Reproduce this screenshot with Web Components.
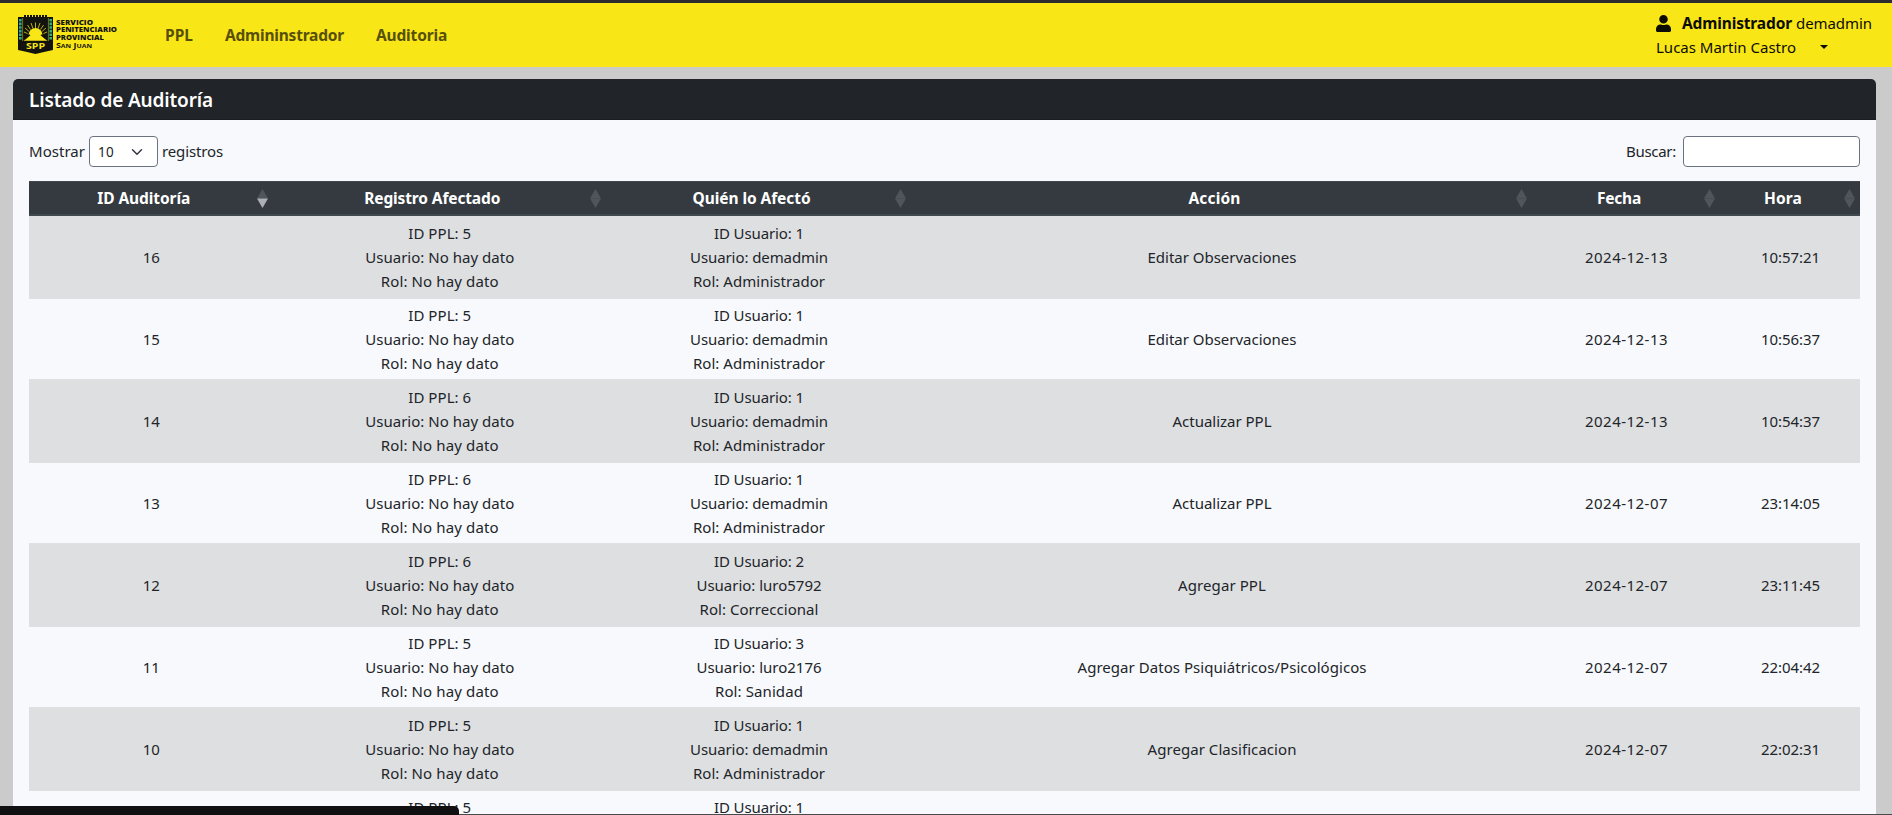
<!DOCTYPE html>
<html lang="es">
<head>
<meta charset="utf-8">
<title>Listado de Auditoría</title>
<style>
html,body{margin:0;height:100%;overflow:hidden}
body{background:#cbcbcb;color:#212529;font:15px/24px "Noto Sans","Open Sans",sans-serif}
</style>
</head>
<body>
<audit-page></audit-page>
<script>
// Text whose tracking is adjusted so that it spans a given width.
class FitText extends HTMLElement {
  constructor() {
    super();
    this.attachShadow({mode: 'open'}).innerHTML =
      '<style>:host{display:inline-block;white-space:nowrap;text-align:left}span{display:inline-block}</style><span><slot></slot></span>';
  }
  connectedCallback() {
    const w = parseFloat(this.getAttribute('w'));
    const span = this.shadowRoot.querySelector('span');
    requestAnimationFrame(() => this.fit(span, w));
    this.fit(span, w);
  }
  fit(span, w) {
    span.style.letterSpacing = '0';
    const n = this.textContent.length;
    const natural = span.getBoundingClientRect().width;
    if (natural) span.style.letterSpacing = ((w - natural) / n).toFixed(4) + 'px';
    this.style.width = w + 'px';
  }
}

class SppLogo extends HTMLElement {
  constructor() {
    super();
    this.attachShadow({mode: 'open'}).innerHTML = `
<style>:host{display:block;width:104px;height:40px}svg{display:block}
text{font-family:"Open Sans","Noto Sans",sans-serif;font-weight:800;font-size:6.4px;fill:#15140c}</style>
<svg width="104" height="40" viewBox="0 0 104 40">
<path d="M0 2H35V35L26 37 17.5 39 9 37 0 35Z" fill="#12130f"/>
<path d="M6 1.2H30" stroke="#12130f" stroke-width="2.4" stroke-dasharray="2 1"/>
<path d="M2.3 4V25M32.7 4V25" stroke="#2fae86" stroke-width="2.6" stroke-dasharray="2.6 1"/>
<path d="M4.6 3V26M30.4 3V26" stroke="#a89d18" stroke-width=".7"/>
<g stroke="#e5d416" stroke-width=".8"><path d="M17.5 13V7.5M15 13.5L13 8M20 13.5L22 8M12.5 14.5L9.5 10M22.5 14.5L25.5 10M10.8 16.3L7 13M24.2 16.3L28 13M9.5 18.5L6 17M25.5 18.5L29 17"/></g>
<path d="M10.5 20A7 7 0 0 1 24.5 20Z" fill="#f9e616"/>
<path d="M5.5 25.8C9 24 12 20 14.8 18.6L17.5 19.5 20.2 18.6C23 20 26 24 29.5 25.8Z" fill="#f9e616"/>
<path d="M6 23L11.5 19.5M29 23L23.5 19.5" stroke="#12130f" stroke-width=".9"/>
<text x="8" y="34.4" textLength="19" lengthAdjust="spacingAndGlyphs" style="font-size:9.6px;fill:#f9e616;font-weight:700">SPP</text>
<text x="38" y="10" textLength="37" lengthAdjust="spacingAndGlyphs">SERVICIO</text>
<text x="38" y="17.4" textLength="61" lengthAdjust="spacingAndGlyphs">PENITENCIARIO</text>
<text x="38" y="25" textLength="48" lengthAdjust="spacingAndGlyphs">PROVINCIAL</text>
<text x="38" y="32.8" textLength="36" lengthAdjust="spacingAndGlyphs" style="font-weight:700">S<tspan font-size="5" style="font-size:5px">AN</tspan> J<tspan style="font-size:5px">UAN</tspan></text>
</svg>`;
  }
}

class TopNav extends HTMLElement {
  constructor() {
    super();
    this.attachShadow({mode: 'open'}).innerHTML = `
<style>
:host{display:flex;box-sizing:border-box;height:67px;border-top:3px solid #2c2b2f;background:#f9e616;padding:0 18px;justify-content:space-between;color:#0d0c02}
.left{display:flex;align-items:flex-start}
spp-logo{margin-top:12px}
nav{display:flex;gap:32px;margin:20px 0 0 43px;color:#575008;font-weight:700;font-size:15.5px}
.user{width:218px;padding-top:8px}
.line{display:flex;height:24px;align-items:center}
.line svg{flex:none;display:block}
.who{margin-left:11px;margin-right:4px;font-weight:700;font-size:15.5px}
.caret{width:0;border:4.5px solid transparent;border-top-color:#0d0c02;border-bottom:0;margin:0 0 0 24px}
</style>
<div class="left"><spp-logo></spp-logo>
<nav><fit-text w="28">PPL</fit-text><fit-text w="119">Admininstrador</fit-text><fit-text w="71">Auditoria</fit-text></nav></div>
<div class="user">
<div class="line"><svg width="15" height="17" viewBox="0 0 448 512" preserveAspectRatio="none"><path d="M224 256A128 128 0 1 0 224 0a128 128 0 0 0 0 256zm-90 32C60 288 0 348 0 422v42c0 26 21 48 48 48h352c27 0 48-22 48-48v-42c0-74-60-134-134-134h-17a174 174 0 0 1-146 0z" fill="#0d0c02"/></svg><fit-text class="who" w="110">Administrador</fit-text><fit-text w="76">demadmin</fit-text></div>
<div class="line"><fit-text w="140">Lucas Martin Castro</fit-text><span class="caret"></span></div>
</div>`;
  }
}

class AuditCard extends HTMLElement {
  constructor() {
    super();
    this.attachShadow({mode: 'open'}).innerHTML = `
<style>
:host{display:block;margin:12px 16px 0 13px;background:#f8f9fc;border-radius:5px 5px 0 0;overflow:hidden}
header{box-sizing:border-box;height:41px;border-bottom:1px solid #1b1e21;background:#212529;color:#fff;font-size:19px;font-weight:600;line-height:43px;padding-left:16px}
.body{padding:16px 16px 0 16px}
</style>
<header><slot name="title"></slot></header><div class="body"><slot></slot></div>`;
  }
}

class TableTools extends HTMLElement {
  constructor() {
    super();
    this.attachShadow({mode: 'open'}).innerHTML = `
<style>
:host{display:flex;justify-content:space-between;height:45px;align-items:flex-start}
div{display:flex;align-items:center;height:31px}
.label{margin-top:-2px}
.select{box-sizing:border-box;width:69px;height:31px;border:1px solid #6b7280;border-radius:4px;background:#fff;margin:0 4px;padding:0 14px 0 8px;justify-content:space-between;font-size:13.5px}
input{box-sizing:border-box;width:177px;height:31px;border:1px solid #6b7280;border-radius:4px;background:#fff;margin:0 0 0 7px;padding:0}
</style>
<div><fit-text class="label" w="56">Mostrar</fit-text><div class="select"><fit-text w="16">10</fit-text><svg width="12" height="12" viewBox="0 0 16 16"><path d="M2 5l6 6 6-6" fill="none" stroke="#343a40" stroke-width="2" stroke-linecap="round" stroke-linejoin="round"/></svg></div><fit-text class="label" w="61">registros</fit-text></div>
<div><fit-text class="label" w="50">Buscar:</fit-text><input type="text" aria-label="Buscar"></div>`;
  }
}

const COLUMNS = '243.5px 333.5px 305px 621px 188px 140px';

class HeadCell extends HTMLElement {
  constructor() {
    super();
    this.attachShadow({mode: 'open'}).innerHTML = `
<style>
:host{display:flex;align-items:center;padding:0 5px 0 2px}
span{flex:1;text-align:center}
svg{flex:none;display:block}
.up,.down{fill:#50555a}
:host([sorted]) .down{fill:#adb0b3}
</style>
<span><slot></slot></span><svg width="11" height="19" viewBox="0 0 11 19"><path class="up" d="M5.5 0L11 9.5H0Z"/><path class="down" d="M0 9.5H11L5.5 19Z"/></svg>`;
  }
}

class AuditHead extends HTMLElement {
  constructor() {
    super();
    this.attachShadow({mode: 'open'}).innerHTML = `
<style>:host{display:grid;grid-template-columns:${COLUMNS};box-sizing:border-box;height:35px;background:#343a40;border-top:1px solid #414950;border-bottom:2px solid #414950;color:#fff;font-weight:700;font-size:15.5px}</style>
<head-cell sorted><fit-text w="93">ID Auditoría</fit-text></head-cell><head-cell><fit-text w="136">Registro Afectado</fit-text></head-cell><head-cell><fit-text w="118">Quién lo Afectó</fit-text></head-cell><head-cell><fit-text w="52">Acción</fit-text></head-cell><head-cell><fit-text w="44">Fecha</fit-text></head-cell><head-cell><fit-text w="38">Hora</fit-text></head-cell>`;
  }
}

class AuditRow extends HTMLElement {
  set record(r) {
    const line = ([t, w]) => `<div><fit-text w="${w}">${t}</fit-text></div>`;
    const root = this.shadowRoot || this.attachShadow({mode: 'open'});
    root.innerHTML = `
<style>
:host{display:grid;grid-template-columns:${COLUMNS};height:82px;box-sizing:border-box;align-items:center;text-align:center;background:#dedfe1}
:host([even]){background:#f8f9fc;box-shadow:inset 0 1px #dee0e4,inset 0 -1px #dee0e4}
section div{height:24px;padding-left:1px}
</style>` + r.map(cell => '<section>' + cell.map(line).join('') + '</section>').join('');
  }
}

class AuditTable extends HTMLElement {
  constructor() {
    super();
    const root = this.attachShadow({mode: 'open'});
    root.innerHTML = '<style>:host{display:block}</style><audit-head></audit-head>';
    const adm = [['ID Usuario: 1', 90], ['Usuario: demadmin', 138], ['Rol: Administrador', 132]];
    const cor = [['ID Usuario: 2', 90], ['Usuario: luro5792', 125], ['Rol: Correccional', 119]];
    const san = [['ID Usuario: 3', 90], ['Usuario: luro2176', 125], ['Rol: Sanidad', 88]];
    const data = [
      [16, 5, adm, ['Editar Observaciones', 149], '2024-12-13', '10:57:21'],
      [15, 5, adm, ['Editar Observaciones', 149], '2024-12-13', '10:56:37'],
      [14, 6, adm, ['Actualizar PPL', 99], '2024-12-13', '10:54:37'],
      [13, 6, adm, ['Actualizar PPL', 99], '2024-12-07', '23:14:05'],
      [12, 6, cor, ['Agregar PPL', 88], '2024-12-07', '23:11:45'],
      [11, 5, san, ['Agregar Datos Psiquiátricos/Psicológicos', 289], '2024-12-07', '22:04:42'],
      [10, 5, adm, ['Agregar Clasificacion', 149], '2024-12-07', '22:02:31']
    ];
    data.forEach(([id, ppl, who, action, date, time], i) => {
      const row = document.createElement('audit-row');
      if (i % 2) row.setAttribute('even', '');
      row.record = [[[id, 17]], [['ID PPL: ' + ppl, 63], ['Usuario: No hay dato', 149], ['Rol: No hay dato', 118]],
        who, [action], [[date, 83]], [[time, 59]]];
      root.append(row);
    });
    // Only the first line of the next record is above the window's lower edge.
    const next = document.createElement('audit-row');
    next.setAttribute('even', '');
    next.style.alignItems = 'start';
    next.style.paddingTop = '5px';
    next.record = [[], [['ID PPL: 5', 63]], [['ID Usuario: 1', 90]], [], [], []];
    root.append(next);
  }
}

class AuditPage extends HTMLElement {
  constructor() {
    super();
    this.attachShadow({mode: 'open'}).innerHTML = `
<style>
:host{display:block;position:relative;height:815px;overflow:hidden}
.status{position:absolute;left:0;bottom:0;width:459px;height:9px;background:#101012;border-radius:0 5px 0 0}
.edge{position:absolute;left:0;right:0;bottom:0;height:1px;background:#4a4a4d}
</style>
<top-nav></top-nav>
<audit-card><fit-text slot="title" w="184">Listado de Auditoría</fit-text><table-tools></table-tools><audit-table></audit-table></audit-card>
<div class="edge"></div><div class="status"></div>`;
  }
}

customElements.define('fit-text', FitText);
customElements.define('spp-logo', SppLogo);
customElements.define('top-nav', TopNav);
customElements.define('audit-card', AuditCard);
customElements.define('table-tools', TableTools);
customElements.define('head-cell', HeadCell);
customElements.define('audit-head', AuditHead);
customElements.define('audit-row', AuditRow);
customElements.define('audit-table', AuditTable);
customElements.define('audit-page', AuditPage);
</script>
</body>
</html>
